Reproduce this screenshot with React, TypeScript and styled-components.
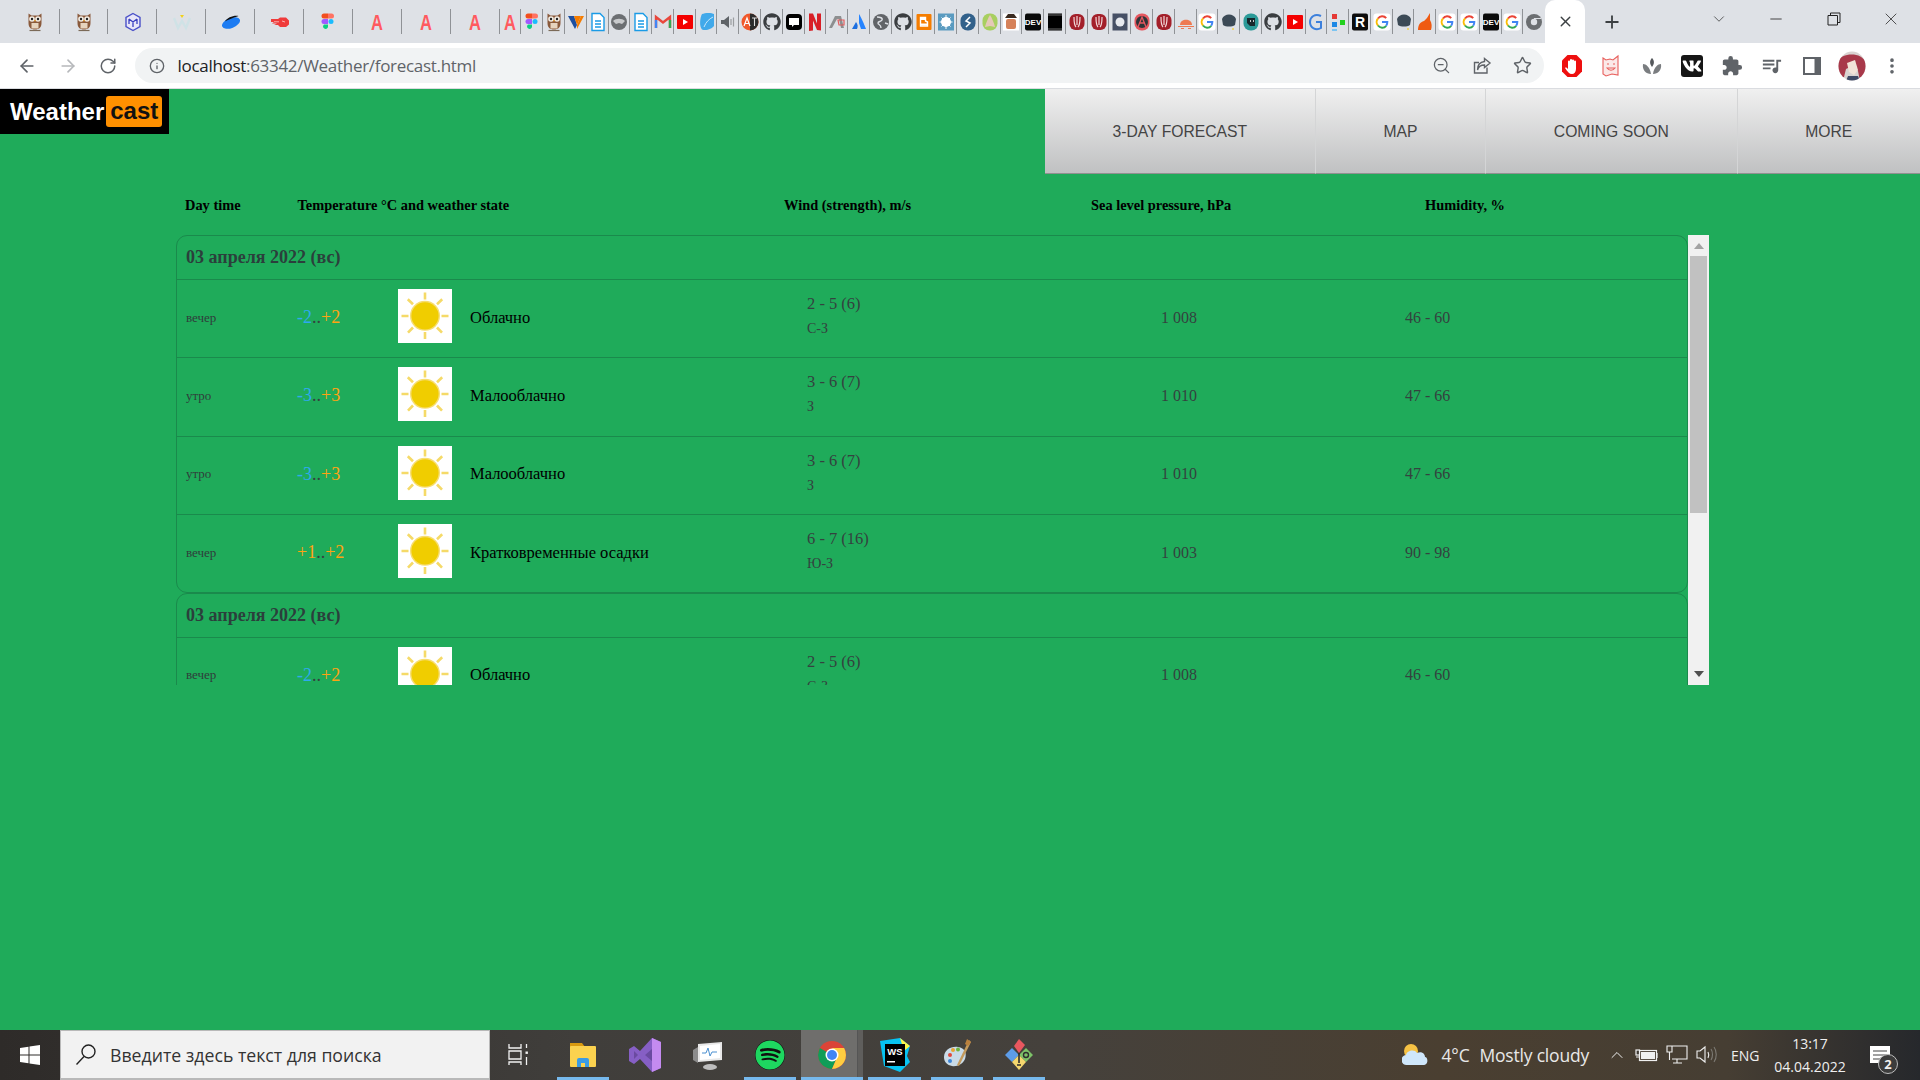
import React from "react";
import styled, { createGlobalStyle } from "styled-components";
import {
  ArrowLeft,
  ArrowRight,
  RotateCw,
  Info,
  ZoomOut,
  Star,
  Plus,
  X,
  ChevronDown,
  Minus,
  EllipsisVertical,
  ChevronUp,
} from "lucide-react";
import { MdExtension, MdQueueMusic } from "react-icons/md";
import { FaSpotify, FaGithub, FaVk } from "react-icons/fa";

const GlobalStyle = createGlobalStyle`
  html, body {
    margin: 0;
    padding: 0;
    width: 1920px;
    height: 1080px;
    overflow: hidden;
  }
`;

const serif = `"Liberation Serif", serif`;
const sans = `"Liberation Sans", sans-serif`;
const uiFont = `"Open Sans", "Noto Sans", sans-serif`;

/* ---------- browser chrome ---------- */

const Page = styled.div`
  display: flex;
  flex-direction: column;
  width: 1920px;
  height: 1080px;
  overflow: hidden;
`;

const TabStrip = styled.div`
  display: flex;
  align-items: stretch;
  height: 43px;
  padding-left: 10.7px;
  background: #dee1e6;
`;

const PinnedTab = styled.div`
  display: flex;
  align-items: center;
  justify-content: center;
  width: 48.9px;
  height: 43px;
  position: relative;
  &::after {
    content: "";
    position: absolute;
    right: 0;
    top: 9px;
    bottom: 9px;
    width: 1px;
    background: #8f9296;
  }
`;

const SmallTabs = styled.div`
  display: flex;
  width: 1045.6px;
`;

const SmallTab = styled(PinnedTab)<{ $last?: boolean }>`
  flex: 1;
  width: auto;
  &::after {
    display: ${(p) => (p.$last ? "none" : "block")};
  }
`;

const ActiveTab = styled.div`
  display: flex;
  align-items: center;
  justify-content: center;
  width: 40px;
  background: #fff;
  border-radius: 10px 10px 0 0;
  color: #3c4043;
`;

const NewTab = styled.div`
  display: flex;
  align-items: center;
  justify-content: center;
  width: 34px;
  margin-left: 10px;
  color: #3c4043;
`;

const WindowControls = styled.div`
  display: flex;
  align-items: flex-start;
  margin-left: auto;
  color: #333;
`;

const WindowButton = styled.div`
  display: flex;
  align-items: center;
  justify-content: center;
  width: 57.5px;
  height: 37px;
`;

const Toolbar = styled.div`
  display: flex;
  align-items: center;
  height: 45px;
  padding: 0 8px 0 7px;
  background: #fff;
  border-bottom: 1px solid #dadce0;
`;

const NavButton = styled.div<{ $muted?: boolean }>`
  display: flex;
  align-items: center;
  justify-content: center;
  width: 40.5px;
  height: 35px;
  color: ${(p) => (p.$muted ? "#b6b8bb" : "#5f6368")};
`;

const Omnibox = styled.div`
  display: flex;
  align-items: center;
  width: 1409px;
  height: 35px;
  margin-left: 6px;
  padding: 0 1px 0 14px;
  box-sizing: border-box;
  border-radius: 18px;
  background: #f1f3f4;
  color: #5f6368;
`;

const Url = styled.div`
  margin-left: 13px;
  font: 400 17px ${uiFont};
  letter-spacing: -0.3px;
  color: #5f6368;
  white-space: nowrap;
  b {
    font-weight: 400;
    color: #202124;
  }
`;

const OmniActions = styled.div`
  display: flex;
  margin-left: auto;
`;

const OmniAction = styled.div`
  display: flex;
  align-items: center;
  justify-content: center;
  width: 40.5px;
  height: 35px;
`;

const Extensions = styled.div`
  display: flex;
  margin-left: 8px;
`;

const ExtButton = styled.div`
  display: flex;
  align-items: center;
  justify-content: center;
  width: 40px;
  height: 35px;
  color: #5f6368;
`;

const VkIcon = styled(FaVk)`
  padding: 1px;
  border-radius: 3px;
  background: #161616;
  color: #fff;
`;

/* ---------- the weather page ---------- */

const Main = styled.main`
  flex: 1;
  min-height: 0;
  background: #1fab5a;
`;

const TopBar = styled.header`
  display: flex;
  justify-content: space-between;
  height: 85px;
`;

const Logo = styled.div`
  display: flex;
  align-items: center;
  box-sizing: border-box;
  width: 169px;
  height: 45px;
  padding-left: 10px;
  background: #000;
  font: 700 24px ${sans};
  color: #fff;
`;

const LogoBadge = styled.span`
  margin-left: 2px;
  padding: 1px 4px 2px;
  border-radius: 3px;
  background: #ff9000;
  color: #111;
`;

const Nav = styled.nav`
  display: flex;
`;

const NavItem = styled.a`
  display: flex;
  align-items: center;
  box-sizing: border-box;
  padding: 2px 67.7px 0;
  border-left: 1px solid #d4d5d6;
  border-bottom: 1px solid #909090;
  background: linear-gradient(#f0f0f0, #c0c1c2);
  font: 400 15.7px ${sans};
  color: #444;
  &:first-child {
    border-left: 0;
  }
`;

const ColumnHeader = styled.div`
  display: grid;
  grid-template-columns: 112.5px 486.5px 307px 334px auto;
  align-items: center;
  box-sizing: border-box;
  height: 61px;
  padding: 2px 0 0 185px;
  font: 700 14.4px ${serif};
  color: #000;
`;

const ForecastPanel = styled.section`
  display: flex;
  width: 1533px;
  height: 450px;
  margin-left: 176px;
`;

const ForecastScroll = styled.div`
  width: 1512px;
  height: 100%;
  overflow: hidden;
`;

const DayGroup = styled.div`
  box-sizing: border-box;
  border: 1px solid #1a8a4c;
  border-radius: 11px;
`;

const DayTitle = styled.div`
  display: flex;
  align-items: center;
  box-sizing: border-box;
  height: 44px;
  padding: 0 0 0 9px;
  border-bottom: 1px solid #1a8a4c;
  font: 700 18px ${serif};
  color: #2b3f3c;
`;

const Row = styled.div`
  display: flex;
  align-items: center;
  box-sizing: border-box;
  height: 78.4px;
  padding: 9px 0 14.4px 9px;
  border-bottom: 1px solid #1a8a4c;
  &:last-child {
    height: 76.4px;
    padding-bottom: 13.4px;
    border-bottom: 0;
  }
`;

const DayPart = styled.div`
  width: 111px;
  padding-top: 3px;
  font: 400 13px ${serif};
  color: #2f3d3a;
`;

const Temp = styled.div`
  width: 101px;
  padding-top: 3px;
  font: 400 18px ${serif};
  color: #34423f;
`;

const TempValue = styled.span<{ $cold: boolean }>`
  color: ${(p) => (p.$cold ? "#2fa8f0" : "#ffa312")};
`;

const StateIcon = styled.svg`
  flex: none;
  width: 54px;
  height: 54px;
  margin-right: 18px;
  background: #fff;
`;

const StateText = styled.div`
  width: 337px;
  padding-top: 3px;
  font: 400 16.5px ${serif};
  color: #000;
`;

const WindCell = styled.div`
  width: 354px;
  padding-top: 1px;
  font: 400 16.5px/24px ${serif};
  color: #34423f;
  span {
    display: block;
    font-size: 14px;
    margin-top: 1px;
  }
`;

const PressureCell = styled.div`
  width: 244px;
  padding-top: 3px;
  font: 400 16px ${serif};
  color: #34423f;
`;

const HumidityCell = styled(PressureCell)`
  width: auto;
`;

const ScrollBar = styled.div`
  display: flex;
  flex-direction: column;
  align-items: center;
  box-sizing: border-box;
  width: 21px;
  height: 100%;
  background: #f1f1f1;
`;

const ScrollArrow = styled.div<{ $down?: boolean }>`
  flex: none;
  width: 0;
  height: 0;
  margin: ${(p) => (p.$down ? "auto 0 8px" : "8px 0 0")};
  border-left: 5px solid transparent;
  border-right: 5px solid transparent;
  border-bottom: ${(p) => (p.$down ? "0" : "6px solid #a3a3a3")};
  border-top: ${(p) => (p.$down ? "6px solid #505050" : "0")};
`;

const ScrollThumb = styled.div`
  flex: none;
  width: 17px;
  height: 257px;
  margin-top: 7px;
  background: #c1c1c1;
`;

/* ---------- windows taskbar ---------- */

const Taskbar = styled.footer`
  display: flex;
  align-items: stretch;
  height: 50px;
  background: linear-gradient(90deg, #2e2b29 0%, #403e3b 30%, #45413c 55%, #4a3f31 75%, #463e33 90%, #26282c 100%);
  color: #f2f2f2;
  font-family: ${uiFont};
`;

const StartButton = styled.div`
  display: flex;
  align-items: center;
  justify-content: center;
  width: 60px;
`;

const SearchBox = styled.div`
  display: flex;
  align-items: center;
  box-sizing: border-box;
  width: 430px;
  padding-left: 14px;
  background: #f2f2f2;
  border: 1px solid #b9b9b9;
  border-bottom-width: 2px;
  font-size: 17.7px;
  color: #333;
`;

const SearchLabel = styled.span`
  margin-left: 13px;
`;

const TaskView = styled.div`
  display: flex;
  align-items: center;
  justify-content: center;
  width: 58px;
  margin-right: 4px;
`;

const TaskButton = styled.div<{ $running?: boolean; $active?: boolean }>`
  display: flex;
  align-items: center;
  justify-content: center;
  box-sizing: border-box;
  width: 62.3px;
  position: relative;
  background: ${(p) => (p.$active ? "linear-gradient(90deg, #6f6e6c 91%, #555 91%, #555 92%, #5f5e5c 92%)" : "transparent")};
  &::after {
    content: "";
    position: absolute;
    left: ${(p) => (p.$active ? "0" : "5px")};
    right: ${(p) => (p.$active ? "0" : "5px")};
    bottom: 0;
    height: 3px;
    background: ${(p) => (p.$running ? "#76b9ed" : "transparent")};
  }
`;

const SpotifyIcon = styled(FaSpotify)`
  border-radius: 50%;
  background: #111;
  color: #1ed760;
`;

const Tray = styled.div`
  display: flex;
  align-items: center;
  margin-left: auto;
`;

const TrayWeather = styled.div`
  display: flex;
  align-items: center;
  margin-right: 13px;
  font-size: 17.5px;
  letter-spacing: -0.2px;
  color: #e8e8e8;
`;

const TrayTemp = styled.span`
  margin: 0 10px 0 12px;
`;

const TrayIcon = styled.div`
  display: flex;
  align-items: center;
  justify-content: center;
  width: 30px;
  color: #f0f0f0;
`;

const Lang = styled.div`
  box-sizing: border-box;
  width: 38px;
  padding-left: 9px;
  font-size: 14px;
  color: #efefef;
`;

const Clock = styled.div`
  width: 100px;
  text-align: center;
  font-size: 14px;
  line-height: 23px;
  color: #efefef;
`;

const Notify = styled.div`
  display: flex;
  align-items: center;
  justify-content: center;
  align-self: stretch;
  box-sizing: border-box;
  width: 60px;
  padding-right: 20px;
  position: relative;
`;

const NotifyBadge = styled.div`
  position: absolute;
  left: 18px;
  top: 24px;
  box-sizing: border-box;
  width: 20px;
  height: 20px;
  border-radius: 50%;
  border: 1px solid #bdbdbd;
  background: #3c3c3c;
  font: 700 13px/18px ${uiFont};
  text-align: center;
  color: #f0f0f0;
`;

/* ---------- drawings ---------- */

const Sun = () => (
  <StateIcon viewBox="0 0 54 54">
    <g stroke="#f5da68" strokeWidth="2.6">
      <path d="M27 3.5v7M27 43v7M3.5 27h7M43.5 27h7M9.8 10.2l5.2 5M39 38.5l5 5.2M44.2 10.2l-5.2 5M15 38.5l-5 5.2" />
    </g>
    <circle cx="27" cy="26.8" r="15" fill="#f7dd70" />
    <circle cx="27" cy="26.8" r="13.6" fill="#f0cd00" />
  </StateIcon>
);

const fav = (content: React.ReactNode) => (
  <svg width="18" height="20" viewBox="0 0 18 20">
    {content}
  </svg>
);

// favicon that is just a letter, taller box so the text is not clipped
const letter = (t: string, color: string, size = 14, bg?: string, squeeze = 1) => (
  <svg width="18" height="26" viewBox="0 0 18 26">
    {bg && <rect x="1" y="4.5" width="16" height="17" rx="2" fill={bg} />}
    <text
      x={9 / squeeze}
      y={13 + size * 0.36}
      fontSize={size}
      fontWeight="700"
      fontFamily="Liberation Sans"
      textAnchor="middle"
      fill={color}
      transform={`scale(${squeeze} 1)`}
    >
      {t}
    </text>
  </svg>
);

const Google = () =>
  fav(
    <>
      <rect x="0.5" y="1.5" width="17" height="17" rx="3" fill="#fff" />
      <path d="M13.2 6.2A5.2 5.2 0 0 0 5 6.500" fill="none" stroke="#ea4335" strokeWidth="2" />
      <path d="M5 6.500A5.2 5.2 0 0 0 5 13.500" fill="none" stroke="#fbbc05" strokeWidth="2" />
      <path d="M5 13.500a5.2 5.2 0 0 0 8.200 .3" fill="none" stroke="#34a853" strokeWidth="2" />
      <path d="M9 10h5.300c0 1.500-.4 2.800-1.100 3.800" fill="none" stroke="#4285f4" strokeWidth="2" />
    </>
  );

const Owl = () =>
  fav(
    <>
      <path d="M2.500 1.500L5.500 3.500h7L15.500 1.500v9.500c0 4.500-2.500 6.500-6.500 6.500s-6.500-2-6.500-6.500z" fill="#8a5a3c" />
      <circle cx="6" cy="7" r="2.800" fill="#f4efe6" />
      <circle cx="12" cy="7" r="2.800" fill="#f4efe6" />
      <circle cx="6" cy="7" r="1.200" fill="#222" />
      <circle cx="12" cy="7" r="1.200" fill="#222" />
      <path d="M8 8h2l-1 2z" fill="#e8a030" />
      <path d="M5.500 11h7v5.500h-7z" fill="#e6d4be" />
      <path d="M3.500 18.500h11" stroke="#7b6a58" strokeWidth="1.200" />
    </>
  );

const Figma = () =>
  fav(
    <>
      <path d="M5 1.500h4v5H5a2.500 2.500 0 0 1 0-5z" fill="#f24e1e" />
      <path d="M9 1.500h3.500a2.500 2.500 0 0 1 0 5H9z" fill="#ff7262" />
      <path d="M5 7h4v5H5a2.500 2.500 0 0 1 0-5z" fill="#a259ff" />
      <circle cx="12" cy="9.500" r="2.500" fill="#1abcfe" />
      <path d="M5 12.500h4V15a2.500 2.500 0 1 1-4-2.500z" fill="#0acf83" />
    </>
  );

const Doc = () =>
  fav(
    <>
      <path d="M3 1.500h8l4 4v13H3z" fill="#fff" stroke="#1a9be6" strokeWidth="1.400" />
      <path d="M6 9h6M6 12h6M6 15h6" stroke="#1a9be6" strokeWidth="1.400" />
    </>
  );

const RedU = () =>
  fav(
    <>
      <rect x="1.500" y="2" width="15" height="16" rx="6" fill="#a3202a" />
      <path d="M6 5c0 5 0 8 2 10M12 5c0 5 0 8-2 10M9 4v9" stroke="#f3d9da" strokeWidth="1.200" fill="none" />
    </>
  );

const faviconSet: Record<string, () => React.ReactNode> = {
  owl: () => <Owl />,
  figma: () => <Figma />,
  doc: () => <Doc />,
  a: () => letter("A", "#ff5a5f", 22, undefined, 0.75),
  maze: () =>
    fav(
      <>
        <path d="M9 1.500l7 4v9l-7 4-7-4v-9z" fill="#e8e6f8" stroke="#4a50c8" strokeWidth="1.400" />
        <path d="M5 7l4 3 4-3M9 10v5M5 7v5M13 7v5" stroke="#3a40c0" strokeWidth="1.300" fill="none" />
      </>
    ),
  w: () =>
    fav(
      <>
        <path d="M1 6l4 10 4-7 4 7 4-10" stroke="#cfe2e6" strokeWidth="2.400" fill="none" />
        <path d="M7 3h4l-2 3z" fill="#f2d21a" />
      </>
    ),
  saucer: () =>
    fav(
      <>
        <ellipse cx="9" cy="11" rx="9.500" ry="5" fill="#1d7cf2" transform="rotate(-22 9 11)" />
        <path d="M3 9.500c2-4 9-6.500 13.500-5.500-3 1-9 3-13.500 5.500z" fill="#111" />
      </>
    ),
  hand: () =>
    fav(
      <>
        <path d="M0 7h7L9 5.500h6l3 3v4L15 15H9l-2-2H3l3-1.500H1l2-1.500H0z" fill="#ef3b3b" />
        <path d="M11 9l3 1M3 9.800h5" stroke="#fff" strokeWidth=".6" />
      </>
    ),
  v: () =>
    fav(
      <>
        <path d="M1 4h6l3 9-2 4z" fill="#1d4fa0" />
        <path d="M10 13l4-9h3l-7 13z" fill="#f57c00" />
        <path d="M7 4l3 9 4-9z" fill="#f57c00" />
      </>
    ),
  hat: () =>
    fav(
      <>
        <circle cx="9" cy="10" r="8" fill="#6c6f72" />
        <path d="M3 9c3-3 9-3 12 0l-3 3-3-1-3 1z" fill="#c8cacc" />
      </>
    ),
  gmail: () =>
    fav(
      <>
        <path d="M2 16V5l7 5.500L16 5v11" fill="none" stroke="#e8473c" strokeWidth="2.400" />
        <path d="M2 16V8" stroke="#4285f4" strokeWidth="2.400" />
        <path d="M16 16V8" stroke="#34a853" strokeWidth="2.400" />
      </>
    ),
  yt: () =>
    fav(
      <>
        <rect x="1" y="3" width="16" height="14" rx="1" fill="#f40000" />
        <path d="M7 7l5 3-5 3z" fill="#fff" />
      </>
    ),
  leaf: () =>
    fav(
      <>
        <path d="M4 2c3-1.500 10-1.500 12 0v12c-2 3-8 5-12 3.500-3-3-2-12 0-15.500z" fill="#41a9ea" />
        <path d="M6 15c2-5 5-8 9-10" stroke="#c8e7fb" strokeWidth="1" fill="none" />
      </>
    ),
  speaker: () =>
    fav(
      <>
        <path d="M2 8h3l5-4v12l-5-4H2z" fill="#5f6368" />
        <path d="M12 7v6M14.500 5.500v9" stroke="#9a9da0" strokeWidth="1.200" />
      </>
    ),
  translate: () =>
    fav(
      <>
        <circle cx="9" cy="10" r="8.500" fill="#f0582b" />
        <path d="M9 1.500A8.500 8.500 0 0 1 9 18.500z" fill="#2b2b2b" />
        <path d="M3 14L6 6l3 8M4.200 11.500h3.600" stroke="#fff" strokeWidth="1.200" fill="none" />
        <path d="M11 6h5M13.500 6v8" stroke="#ddd" strokeWidth="1.100" />
      </>
    ),
  github: () => <FaGithub size={18} color="#3a3d40" />,
  bubble: () =>
    fav(
      <>
        <rect x="1" y="2" width="16" height="16" rx="4" fill="#000" />
        <path d="M4 6h10v7H9l-2 2v-2H4z" fill="#fff" />
      </>
    ),
  netflix: () => fav(<path d="M3 1.500h4l4 10v-10h4v17l-4-.6-4-9.400v10l-4 .5z" fill="#d81f26" />),
  ac: () =>
    fav(
      <>
        <path d="M1 16L7 4h6l3 12h-3l-2-9H9l-5 9z" fill="#8d8f90" />
        <path d="M10 8h6v5h-5z" fill="none" stroke="#e25d5d" strokeWidth="1.200" />
      </>
    ),
  atlassian: () =>
    fav(
      <>
        <path d="M9 2c2 3 5 10 7 15h-5L9 11z" fill="#2684ff" />
        <path d="M6 10L2 17h5c1-2 1-5-1-7z" fill="#1d6fe0" />
      </>
    ),
  globe: () =>
    fav(
      <>
        <circle cx="9" cy="10" r="8" fill="#616468" />
        <path d="M5 5c3 0 6 1 5 3s-4 1-4 3 3 1 3 5M13 11l3 1" stroke="#dee1e6" strokeWidth="1.400" fill="none" />
      </>
    ),
  blogger: () =>
    fav(
      <>
        <rect x="1.500" y="2" width="15" height="16" rx="1" fill="#f57d00" />
        <path d="M6 7h4M6 12.500h6" stroke="#fff" strokeWidth="2.200" />
        <path d="M5.500 5.500v8.500h7v-4l-2-1V5.500z" fill="none" stroke="#fff" strokeWidth="1.400" />
      </>
    ),
  splash: () =>
    fav(
      <>
        <rect x="1" y="1.500" width="16" height="17" fill="#5a9bc0" />
        <circle cx="9" cy="10" r="5" fill="#fff" />
        <path d="M9 3v14M2.500 10h13M4.500 5.500l9 9M13.500 5.500l-9 9" stroke="#fff" strokeWidth="1" />
      </>
    ),
  s: () =>
    fav(
      <>
        <rect x="1.500" y="1.500" width="15" height="17" rx="7" fill="#32618b" />
        <path d="M11 5L7 9l4 2-4 4" stroke="#fff" strokeWidth="1.500" fill="none" />
      </>
    ),
  yoga: () =>
    fav(
      <>
        <rect x="1.500" y="1.500" width="15" height="17" rx="7" fill="#a8cf60" />
        <path d="M9 3c2 3 4 8 5 12l-5-1-5 1c1-4 3-9 5-12z" fill="#e5c9b7" />
      </>
    ),
  pirate: () =>
    fav(
      <>
        <rect x="1" y="1.500" width="16" height="17" fill="#fff" />
        <path d="M3 6h12L12 2H6z" fill="#3b2b20" />
        <rect x="4" y="7" width="10" height="10" rx="2" fill="#d6825a" />
      </>
    ),
  dev: () => letter("DEV", "#fff", 8, "#0a0a0a"),
  black: () =>
    fav(
      <>
        <rect x="2" y="1.500" width="14" height="17" fill="#000" />
        <path d="M2 3h14M2 17h14" stroke="#666" strokeWidth="1" />
      </>
    ),
  u: () => <RedU />,
  spark: () =>
    fav(
      <>
        <rect x="1.500" y="1.500" width="15" height="17" fill="#465065" />
        <circle cx="9" cy="10" r="4.500" fill="#e6e9ee" />
      </>
    ),
  anarchy: () =>
    fav(
      <>
        <rect x="1.500" y="1.500" width="15" height="17" rx="7" fill="#e5575f" />
        <circle cx="9" cy="10" r="6" fill="#2e3438" />
        <path d="M5 15l4-10 4 10M6 11h6" stroke="#e5575f" strokeWidth="1.300" fill="none" />
      </>
    ),
  cloud: () =>
    fav(
      <>
        <path d="M3 13c0-7 12-7 12 0z" fill="#ee7a52" />
        <path d="M1 14.500h16M4 16.500h3M11 16.500h3" stroke="#ee7a52" strokeWidth="1.100" />
      </>
    ),
  g: () => <Google />,
  darkhat: () =>
    fav(
      <>
        <path d="M2 7c2-6 12-6 14 0l-1 6c-3 2-9 2-12 0z" fill="#3c4a56" />
        <circle cx="13" cy="17" r="1" fill="#f3d04c" />
      </>
    ),
  teal: () =>
    fav(
      <>
        <rect x="1.500" y="1.500" width="15" height="17" rx="7" fill="#2b9a98" />
        <path d="M5 6h8v8H8l-3-3z" fill="#17282c" />
        <path d="M8 9h1M11 9h1" stroke="#fff" strokeWidth="1.400" />
      </>
    ),
  blueg: () => fav(<path d="M14 4C8 1 3 5 3 10c0 6 6 9 11 6v-6H9" fill="none" stroke="#3d80dc" strokeWidth="2" />),
  dots: () =>
    fav(
      <>
        <rect x="3" y="2" width="5" height="5" fill="#e53935" />
        <rect x="11" y="8" width="5" height="5" fill="#22d11f" />
        <rect x="3" y="10" width="5" height="5" fill="#1e88e5" />
        <rect x="3" y="17" width="5" height="2" fill="#7cc5f2" />
      </>
    ),
  r: () => letter("R", "#fff", 14, "#0c0c0c"),
  cat: () => fav(<path d="M2 18c0-5 2-8 6-9l3-3 3-5v7c2 3 2 7 1 10z" fill="#ef5a12" />),
  chrome: () =>
    fav(
      <>
        <circle cx="9" cy="10" r="8" fill="#6b6e71" />
        <circle cx="9" cy="10" r="3.200" fill="#dee1e6" />
        <path d="M9 6.500h7" stroke="#dee1e6" strokeWidth="1" />
      </>
    ),
};

const pinnedIcons = ["owl", "owl", "maze", "w", "saucer", "hand", "figma", "a", "a", "a"];
const smallIcons = [
  "a", "figma", "owl", "v", "doc", "hat", "doc", "gmail", "yt", "leaf", "speaker", "translate",
  "github", "bubble", "netflix", "ac", "atlassian", "globe", "github", "blogger", "splash", "s",
  "yoga", "pirate", "dev", "black", "u", "u", "spark", "anarchy", "u", "cloud", "g", "darkhat",
  "teal", "github", "yt", "blueg", "dots", "r", "g", "darkhat", "cat", "g", "g", "dev", "g", "chrome",
];

const ShareIcon = () => (
  <svg width="20" height="20" viewBox="0 0 20 20" fill="none" stroke="#5f6368" strokeWidth="1.400">
    <path d="M15 11.500V17H2.500V6.500H7" />
    <path d="M12.500 2.500L18 7l-5.500 4.500V9C9 9 6.500 10.500 5.500 14c0-5 2.500-8 7-8.500z" />
  </svg>
);

const AdBlockIcon = () => (
  <svg width="22" height="24" viewBox="0 0 22 24">
    <path d="M6.500 1h9L21 6.500v11L15.500 23h-9L1 17.500v-11z" fill="#ee0f0f" />
    <path d="M7 12V7.500a1 1 0 0 1 2 0V6a1 1 0 0 1 2 0v.5a1 1 0 0 1 2 0v1a1 1 0 0 1 2 0V15c0 3-2 5-4 5-3 0-4-2-7-6 1-1 2 0 3 1z" fill="#fff" />
  </svg>
);

const FaceExtIcon = () => (
  <svg width="22" height="24" viewBox="0 0 22 24" fill="#fbe9e8" stroke="#e8605d" strokeWidth="1.100">
    <path d="M2 4l3 2 4-1 3 1 5-4v19l-6-1-6 2-3-2z" />
    <path d="M6 10h2M12 10h2M6 14c2 3 6 3 8 0z" />
  </svg>
);

const LotusIcon = () => (
  <svg width="22" height="20" viewBox="0 0 22 20">
    <path d="M11 2c2 2 3 5 0 9-3-4-2-7 0-9z" fill="#55585c" />
    <path d="M2 8c3 0 7 3 8 10-5 0-9-4-8-10zM20 8c-3 0-7 3-8 10 5 0 9-4 8-10z" fill="#7a7d80" />
  </svg>
);

const PanelIcon = () => (
  <svg width="18" height="20" viewBox="0 0 18 20">
    <path d="M1 2h16v16H1z" fill="#fff" stroke="#5f6368" strokeWidth="2" />
    <path d="M11.500 2H17v16h-5.500z" fill="#5f6368" />
  </svg>
);

const Avatar = () => (
  <svg width="28" height="30" viewBox="0 0 28 30">
    <clipPath id="avatarClip">
      <ellipse cx="14" cy="15" rx="13.500" ry="14.500" />
    </clipPath>
    <g clipPath="url(#avatarClip)">
      <rect width="28" height="30" fill="#d9d3d1" />
      <path d="M0 30V10C3 2 24 0 28 12v18h-6l-2-10-4-6-8 4-2 8z" fill="#a8394a" />
      <path d="M9 12l8-3 3 10-4 5-5-3z" fill="#f2e3d8" />
      <path d="M10 25h10l2 5H8z" fill="#3f4a66" />
    </g>
  </svg>
);

const WindowsLogo = () => (
  <svg width="20" height="20" viewBox="0 0 20 20" fill="#fff">
    <path d="M0 3l8.500-1.200V9.500H0zM9.500 1.600L20 0v9.500H9.500zM0 10.500h8.500v7.700L0 17zM9.500 10.500H20V20L9.500 18.400z" />
  </svg>
);

const SearchGlyph = () => (
  <svg width="22" height="24" viewBox="0 0 22 24" fill="none" stroke="#222" strokeWidth="1.400">
    <circle cx="13.500" cy="8.500" r="6.500" />
    <path d="M9 13.500L1.500 21.500" />
  </svg>
);

const TaskViewIcon = () => (
  <svg width="22" height="22" viewBox="0 0 22 22" fill="none" stroke="#f2f2f2" strokeWidth="1.300">
    <path d="M1 0v4h12V0M1 21v-3h12v3M1 7h12v8H1zM18.500 0v4M18.500 13v8" />
    <rect x="17.500" y="7.500" width="2.400" height="2.400" fill="#f2f2f2" stroke="none" />
  </svg>
);

const Explorer = () => (
  <svg width="28" height="28" viewBox="0 0 28 28">
    <path d="M1 2h12l3 4H1z" fill="#d99a10" />
    <rect x="1" y="5" width="26" height="21" rx="1" fill="#fbd24f" />
    <path d="M8 26v-7a2 2 0 0 1 2-2h8a2 2 0 0 1 2 2v7h-4v-4h-4v4z" fill="#3a9be4" />
  </svg>
);

const VisualStudio = () => (
  <svg width="32" height="34" viewBox="0 0 32 34">
    <path d="M23 0l9 4v26l-9 4-12-13-6 5-5-3V11l5-3 6 5z" fill="#865fc5" />
    <path d="M23 0l9 4v26l-9 4z" fill="#c48bf0" />
    <path d="M5 13v8l4-4zM23 11l-7 6 7 6z" fill="#6a4aa0" />
  </svg>
);

const Monitor = () => (
  <svg width="30" height="32" viewBox="0 0 30 32">
    <path d="M0 11l5-3v16l-5-3z" fill="#8c8c8c" />
    <path d="M5 5l24-2v18L5 23z" fill="#e8e8e8" />
    <path d="M7 7l20-2v14L7 21z" fill="#fff" />
    <path d="M9 14h4l2-5 2 8 2-4h5" fill="none" stroke="#4a8fd0" strokeWidth="1" />
    <ellipse cx="17" cy="28" rx="7" ry="3" fill="#bdbdbd" />
  </svg>
);

const ChromeIcon = () => (
  <svg width="28" height="28" viewBox="0 0 28 28">
    <circle cx="14" cy="14" r="14" fill="#db4437" />
    <path d="M14 14L1.900 7A14 14 0 0 0 14 28l6-14z" fill="#0f9d58" />
    <path d="M14 28A14 14 0 0 0 26.100 7H14l6 7z" fill="#ffcd40" />
    <circle cx="14" cy="14" r="6.500" fill="#fff" />
    <circle cx="14" cy="14" r="5" fill="#4285f4" />
  </svg>
);

const WebStorm = () => (
  <svg width="30" height="34" viewBox="0 0 30 34">
    <path d="M0 3l20-3 10 8-3 10 3 6-10 10L4 28z" fill="#07c3f2" />
    <path d="M20 0l10 8-6 5z" fill="#fcf84a" />
    <rect x="5" y="6" width="20" height="22" fill="#000" />
    <text x="15" y="17" fontSize="9.500" fontWeight="700" fontFamily="Liberation Sans" textAnchor="middle" fill="#fff">
      WS
    </text>
    <rect x="7" y="23" width="8" height="1.500" fill="#fff" />
  </svg>
);

const PaletteIcon = () => (
  <svg width="30" height="32" viewBox="0 0 30 32">
    <path d="M2 18c0-7 7-11 14-10 7 1 9 6 7 12-2 5-8 8-13 7-5-1-8-4-8-9z" fill="#c9dbe8" />
    <circle cx="8" cy="16" r="2" fill="#e0483c" />
    <circle cx="11" cy="11" r="2" fill="#e8a534" />
    <circle cx="16" cy="10.500" r="2" fill="#6cb33f" />
    <circle cx="8" cy="22" r="2" fill="#3e86d8" />
    <path d="M27 1l2 2-12 24-2-1z" fill="#c49a5c" />
    <path d="M25 0l4 3-3 4-3-2z" fill="#b9803d" />
  </svg>
);

const Kraken = () => (
  <svg width="30" height="32" viewBox="0 0 30 32">
    <path d="M8 9l7 7-7 7-7-7z" fill="#5d9ce8" />
    <path d="M22 9l7 7-7 7-7-7z" fill="#7dc268" />
    <path d="M15 16l7 7-7 8-7-8z" fill="#f5d76e" />
    <path d="M15 0l6 6-6 8-5-7z" fill="#e8575f" />
    <path d="M15 14v10M13 26h4" stroke="#2e2e2e" strokeWidth="1.600" />
    <circle cx="22" cy="16" r="2.500" fill="none" stroke="#2e2e2e" strokeWidth="1.400" />
  </svg>
);

const CloudTray = () => (
  <svg width="28" height="24" viewBox="0 0 28 24">
    <circle cx="9" cy="8" r="7" fill="#f6c244" />
    <path d="M5 22a5 5 0 0 1-1-10c1-5 9-6 11-2 5-2 8 1 8 4 3 0 4 8-2 8z" fill="#cfe7fb" />
  </svg>
);

const BatteryTray = () => (
  <svg width="24" height="16" viewBox="0 0 24 16" fill="none" stroke="#f0f0f0" strokeWidth="1.200">
    <rect x="4.500" y="3.500" width="17" height="10" />
    <rect x="6" y="5" width="14" height="7" fill="#f0f0f0" stroke="none" />
    <path d="M22 6v5M1 6h3M1 10h3" />
    <rect x="1" y="3" width="3.500" height="5" fill="#3f3a33" />
  </svg>
);

const NetworkTray = () => (
  <svg width="22" height="20" viewBox="0 0 22 20" fill="none" stroke="#f0f0f0" strokeWidth="1.100">
    <path d="M4 1h17v13H6M11 14v4M7 18h9M1 1h5v6H1zM3.500 7v8" />
  </svg>
);

const VolumeTray = () => (
  <svg width="22" height="20" viewBox="0 0 22 20" fill="none" stroke="#f0f0f0" strokeWidth="1.100">
    <path d="M1 6h3l5-4v15l-5-4H1z" />
    <path d="M12 7c1 2 1 4 0 6" />
    <path d="M15 4c2 3 2 8 0 11M18 2c3 4 3 11 0 15" stroke="#7d7a74" />
  </svg>
);

const NotifyIcon = () => (
  <svg width="20" height="18" viewBox="0 0 20 18">
    <path d="M0 0h20v17H0z" fill="#fff" />
    <path d="M3 5h14M3 9h14M3 13h10" stroke="#444" strokeWidth="1.200" />
  </svg>
);

/* ---------- data ---------- */

interface ForecastRow {
  part: string;
  min: string;
  max: string;
  state: string;
  wind: string;
  direction: string;
  pressure: string;
  humidity: string;
}

const rows: ForecastRow[] = [
  { part: "вечер", min: "-2", max: "+2", state: "Облачно", wind: "2 - 5 (6)", direction: "С-З", pressure: "1 008", humidity: "46 - 60" },
  { part: "утро", min: "-3", max: "+3", state: "Малооблачно", wind: "3 - 6 (7)", direction: "З", pressure: "1 010", humidity: "47 - 66" },
  { part: "утро", min: "-3", max: "+3", state: "Малооблачно", wind: "3 - 6 (7)", direction: "З", pressure: "1 010", humidity: "47 - 66" },
  { part: "вечер", min: "+1", max: "+2", state: "Кратковременные осадки", wind: "6 - 7 (16)", direction: "Ю-З", pressure: "1 003", humidity: "90 - 98" },
];

const navItems = ["3-DAY FORECAST", "MAP", "COMING SOON", "MORE"];
const groups = ["03 апреля 2022 (вс)", "03 апреля 2022 (вс)"];

const App: React.FC = () => {
  return (
    <Page>
      <GlobalStyle />
      <TabStrip>
        {pinnedIcons.map((name, i) => (
          <PinnedTab key={i}>{faviconSet[name]()}</PinnedTab>
        ))}
        <SmallTabs>
          {smallIcons.map((name, i) => (
            <SmallTab key={i} $last={i === smallIcons.length - 1}>
              {faviconSet[name]()}
            </SmallTab>
          ))}
        </SmallTabs>
        <ActiveTab>
          <X size={17} strokeWidth={2} />
        </ActiveTab>
        <NewTab>
          <Plus size={20} strokeWidth={2.2} />
        </NewTab>
        <WindowControls>
          <WindowButton>
            <ChevronDown size={18} strokeWidth={1} />
          </WindowButton>
          <WindowButton>
            <Minus size={18} strokeWidth={1.2} />
          </WindowButton>
          <WindowButton>
            <svg width="14" height="14" viewBox="0 0 14 14" fill="none" stroke="#222" strokeWidth="1">
              <path d="M1 3.500h9.500V13H1zM3.500 3.500V1H13v9.500h-2.500" />
            </svg>
          </WindowButton>
          <WindowButton>
            <X size={20} strokeWidth={1} />
          </WindowButton>
        </WindowControls>
      </TabStrip>

      <Toolbar>
        <NavButton>
          <ArrowLeft size={20} strokeWidth={2} />
        </NavButton>
        <NavButton $muted>
          <ArrowRight size={20} strokeWidth={2} />
        </NavButton>
        <NavButton>
          <RotateCw size={18} strokeWidth={2} />
        </NavButton>
        <Omnibox>
          <Info size={16} strokeWidth={2} />
          <Url>
            <b>localhost</b>:63342/Weather/forecast.html
          </Url>
          <OmniActions>
            <OmniAction>
              <ZoomOut size={19} strokeWidth={1.6} />
            </OmniAction>
            <OmniAction>
              <ShareIcon />
            </OmniAction>
            <OmniAction>
              <Star size={19} strokeWidth={1.8} />
            </OmniAction>
          </OmniActions>
        </Omnibox>
        <Extensions>
          <ExtButton>
            <AdBlockIcon />
          </ExtButton>
          <ExtButton>
            <FaceExtIcon />
          </ExtButton>
          <ExtButton>
            <LotusIcon />
          </ExtButton>
          <ExtButton>
            <VkIcon size={20} />
          </ExtButton>
          <ExtButton>
            <MdExtension size={22} />
          </ExtButton>
          <ExtButton>
            <MdQueueMusic size={23} />
          </ExtButton>
          <ExtButton>
            <PanelIcon />
          </ExtButton>
          <ExtButton>
            <Avatar />
          </ExtButton>
          <ExtButton>
            <EllipsisVertical size={20} strokeWidth={2.4} />
          </ExtButton>
        </Extensions>
      </Toolbar>

      <Main>
        <TopBar>
          <Logo>
            Weather<LogoBadge>cast</LogoBadge>
          </Logo>
          <Nav>
            {navItems.map((item) => (
              <NavItem key={item}>{item}</NavItem>
            ))}
          </Nav>
        </TopBar>

        <ColumnHeader>
          <div>Day time</div>
          <div>Temperature °C and weather state</div>
          <div>Wind (strength), m/s</div>
          <div>Sea level pressure, hPa</div>
          <div>Humidity, %</div>
        </ColumnHeader>

        <ForecastPanel>
          <ForecastScroll>
            {groups.map((title, g) => (
              <DayGroup key={g}>
                <DayTitle>{title}</DayTitle>
                {rows.map((row, i) => (
                  <Row key={i}>
                    <DayPart>{row.part}</DayPart>
                    <Temp>
                      <TempValue $cold={row.min.startsWith("-")}>{row.min}</TempValue>..
                      <TempValue $cold={false}>{row.max}</TempValue>
                    </Temp>
                    <Sun />
                    <StateText>{row.state}</StateText>
                    <WindCell>
                      {row.wind}
                      <span>{row.direction}</span>
                    </WindCell>
                    <PressureCell>{row.pressure}</PressureCell>
                    <HumidityCell>{row.humidity}</HumidityCell>
                  </Row>
                ))}
              </DayGroup>
            ))}
          </ForecastScroll>
          <ScrollBar>
            <ScrollArrow />
            <ScrollThumb />
            <ScrollArrow $down />
          </ScrollBar>
        </ForecastPanel>
      </Main>

      <Taskbar>
        <StartButton>
          <WindowsLogo />
        </StartButton>
        <SearchBox>
          <SearchGlyph />
          <SearchLabel>Введите здесь текст для поиска</SearchLabel>
        </SearchBox>
        <TaskView>
          <TaskViewIcon />
        </TaskView>
        <TaskButton $running>
          <Explorer />
        </TaskButton>
        <TaskButton>
          <VisualStudio />
        </TaskButton>
        <TaskButton>
          <Monitor />
        </TaskButton>
        <TaskButton $running>
          <SpotifyIcon size={30} />
        </TaskButton>
        <TaskButton $running $active>
          <ChromeIcon />
        </TaskButton>
        <TaskButton $running>
          <WebStorm />
        </TaskButton>
        <TaskButton $running>
          <PaletteIcon />
        </TaskButton>
        <TaskButton $running>
          <Kraken />
        </TaskButton>
        <Tray>
          <TrayWeather>
            <CloudTray />
            <TrayTemp>4°C</TrayTemp>
            Mostly cloudy
          </TrayWeather>
          <TrayIcon>
            <ChevronUp size={20} strokeWidth={1.2} />
          </TrayIcon>
          <TrayIcon>
            <BatteryTray />
          </TrayIcon>
          <TrayIcon>
            <NetworkTray />
          </TrayIcon>
          <TrayIcon>
            <VolumeTray />
          </TrayIcon>
          <Lang>ENG</Lang>
          <Clock>
            13:17
            <br />
            04.04.2022
          </Clock>
          <Notify>
            <NotifyIcon />
            <NotifyBadge>2</NotifyBadge>
          </Notify>
        </Tray>
      </Taskbar>
    </Page>
  );
};

export default App;
